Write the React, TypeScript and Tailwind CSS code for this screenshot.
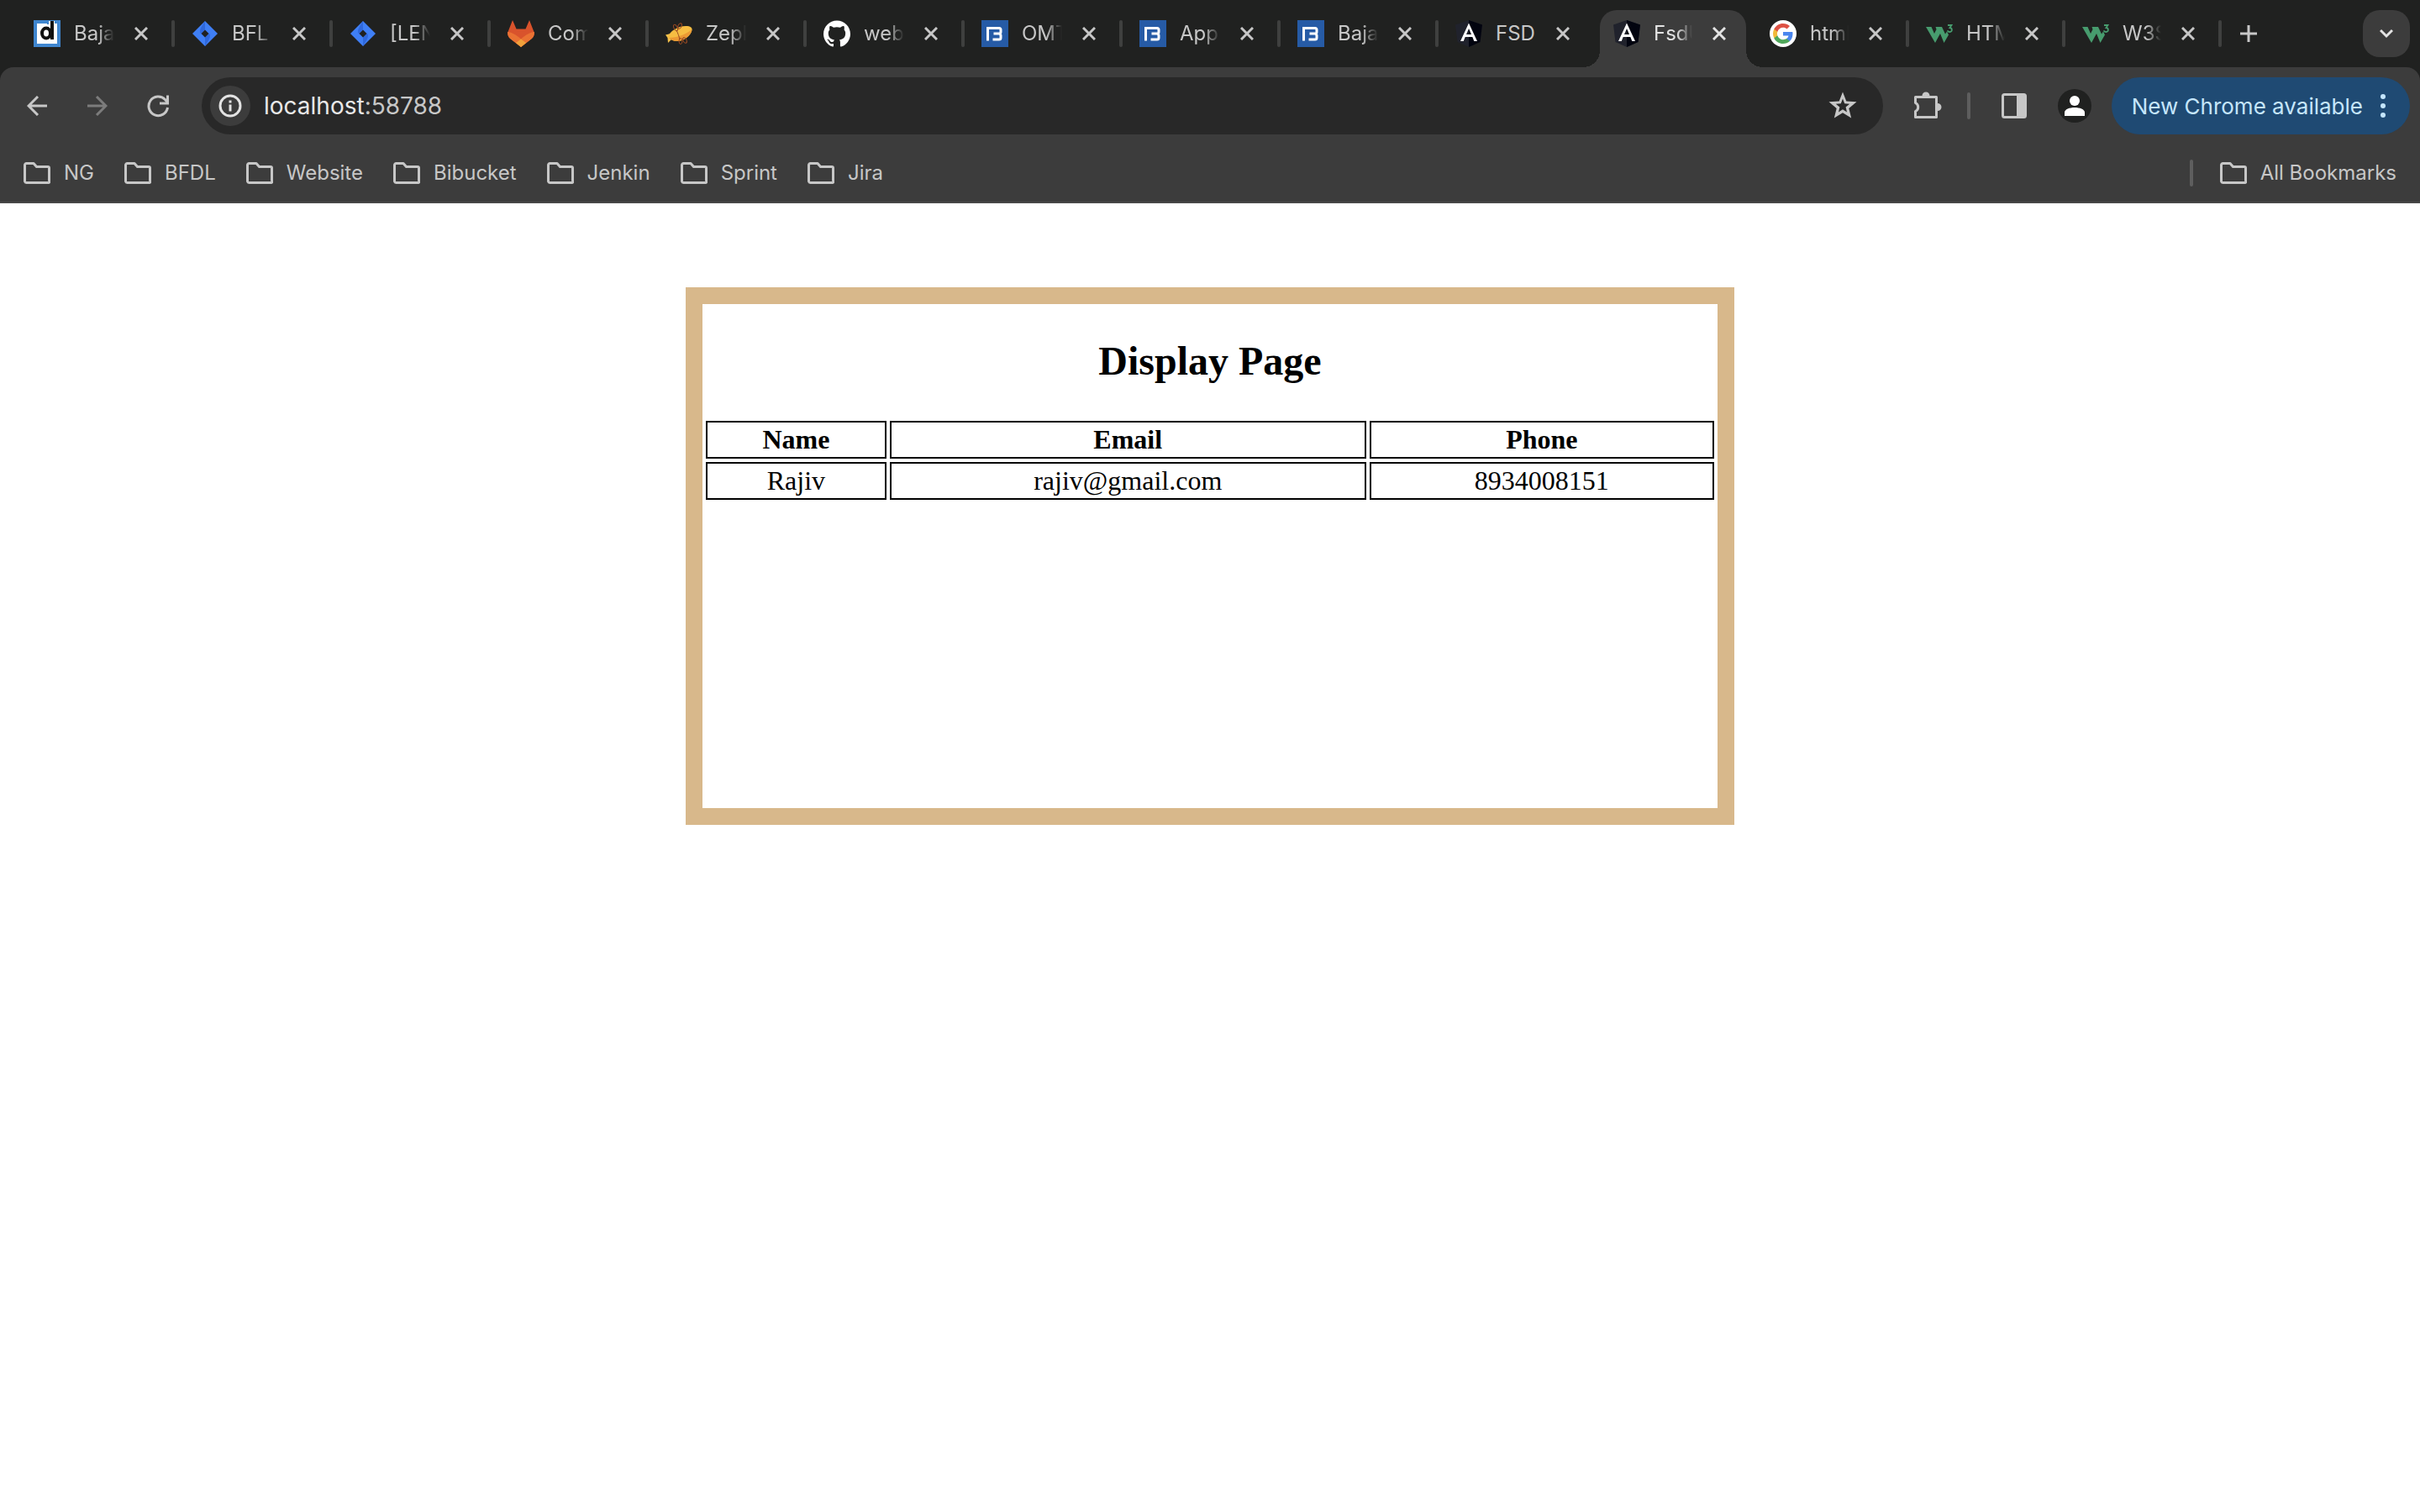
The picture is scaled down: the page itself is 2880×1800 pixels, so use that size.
import React from "react";
import { SiGithub } from "react-icons/si";

function DFav() {
  return (
    <svg className="size-8 shrink-0" viewBox="0 0 32 32" aria-hidden="true">
      <rect width="32" height="32" fill="#3f86cf" />
      <path d="M4 4h12v1h2V1h7v3h3v24H4z" fill="#fff" />
      <path d="M22 1v22" stroke="#111" strokeWidth="4" fill="none" />
      <ellipse cx="15" cy="15.500" rx="5" ry="6" stroke="#111" strokeWidth="4" fill="none" />
    </svg>
  );
}

function JiraFav() {
  return (
    <svg className="size-8 shrink-0" viewBox="0 0 32 32" aria-hidden="true">
      <path d="M16 1 31 16 16 31 1 16z" fill="#3f7ff5" />
      <path d="M16 1v10.500l-5 5C8 12 12 8 16 1z" fill="#2f68dc" />
      <path d="M16 31V20.500l5-5C24 20 20 24 16 31z" fill="#2f68dc" />
      <path d="M16 11.500 20.500 16 16 20.500 11.500 16z" fill="#202120" />
    </svg>
  );
}

function GitlabFav() {
  return (
    <svg className="size-8 shrink-0" viewBox="0 0 32 32" aria-hidden="true">
      <path d="M6 0 10.500 10.500h11L26 0l5.500 14c1 3-.5 6-2.500 7.500L16 32 3 21.500C1 20-.5 17 .5 14z" fill="#d9532c" />
      <path d="M0 14c5 .5 10 3 16 8.500C22 17 27 14.500 32 14c0 3.500-1 6-3 8L16 32 3 22c-2-2-3-4.500-3-8z" fill="#ea7233" />
      <path d="M16 22.500 22 27 16 32l-6-5z" fill="#f0a13b" />
    </svg>
  );
}

function ZeplinFav() {
  return (
    <svg className="size-8 shrink-0" viewBox="0 0 32 32" aria-hidden="true">
      <path d="M0 17.500 6 16 7 23 3 27 2.500 21z" fill="#f3c04a" />
      <path d="M3 20C5 13 15 7 24 7c6 0 8 2 7.500 5C30.500 18 22 25 14 25c-5 0-8-2-11-5z" fill="#f6bd42" />
      <path d="M4 21c9 0 21-4 27.300-10C31.500 17 22 25 14 25c-5 0-8-2-10-4z" fill="#ec9a34" />
      <g fill="none" stroke="#9a4a22" strokeWidth="1">
        <ellipse cx="12" cy="9" rx="2" ry="4" transform="rotate(-25 12 9)" />
        <ellipse cx="17" cy="7" rx="2" ry="3.500" transform="rotate(25 17 7)" />
        <path d="M13 12c2 4 3 7 4 11" />
        <ellipse cx="18" cy="25" rx="2" ry="3.500" />
        <ellipse cx="23" cy="24" rx="2" ry="3.500" transform="rotate(-25 23 24)" />
      </g>
    </svg>
  );
}

function BFav() {
  return (
    <svg className="size-8 shrink-0" viewBox="0 0 32 32" aria-hidden="true">
      <rect width="32" height="32" fill="#265ba6" />
      <path d="M7.500 24.500V9.500H21q2 0 2 2V14q0 2-2 2h-6.500M21 16q2 .5 2 2.500V21q0 2-2 2h-7.500" fill="none" stroke="#fff" strokeWidth="3" />
    </svg>
  );
}

function AngularFav() {
  return (
    <svg className="size-8 shrink-0" viewBox="0 0 32 32" aria-hidden="true">
      <path d="M16 0 32 5.500 29.500 26 16 32 2.500 26 0 5.500z" fill="#20222c" />
      <path d="M16 0 32 5.500 29.500 26 16 32z" fill="#02040f" />
      <path d="M16 3.500 6 25h3.700l2-5h8.600l2 5H26zm0 6.500 3 7h-6z" fill="#fff" />
    </svg>
  );
}

function GoogleFav() {
  return (
    <svg className="size-8 shrink-0" viewBox="0 0 32 32" aria-hidden="true">
      <circle cx="16" cy="16" r="16" fill="#fff" />
      <g transform="translate(4 4)">
        <path fill="#4a86ee" d="M23.500 12.300c0-.8-.1-1.600-.2-2.300H12v4.500h6.500c-.3 1.500-1.100 2.700-2.400 3.600v3h3.900c2.200-2.100 3.500-5.200 3.500-8.800z" />
        <path fill="#4fa75a" d="M12 24c3.200 0 6-1.100 8-2.900l-3.900-3c-1.100.7-2.500 1.200-4.100 1.200-3.100 0-5.800-2.100-6.700-5H1.300v3.100C3.300 21.300 7.300 24 12 24z" />
        <path fill="#f2b93a" d="M5.300 14.300c-.5-1.500-.5-3.100 0-4.600V6.600h-4c-1.700 3.400-1.700 7.400 0 10.800z" />
        <path fill="#dd5144" d="M12 4.700c1.800 0 3.300.6 4.600 1.800L20 3.100C17.900 1.200 15.200 0 12 0 7.300 0 3.300 2.700 1.300 6.600l4 3.100c.9-2.900 3.600-5 6.700-5z" />
      </g>
    </svg>
  );
}

function W3Fav() {
  return (
    <svg className="size-8 shrink-0" viewBox="0 0 32 32" aria-hidden="true">
      <path d="M0 8h6.500l3.500 8 2.500-5-1-3H19l4 8.500 2-3 2 4-5.500 9.500-4.500-11-6 11z" fill="#479c6e" />
      <path d="M26 6h4.500l-2 3c3 0 3.300 5 0 5-1.300 0-2.500-.5-2.500-1.800" fill="none" stroke="#479c6e" strokeWidth="1.800" />
    </svg>
  );
}

function CloseIcon() {
  return (
    <svg className="size-4" viewBox="0 0 16 16" fill="none" stroke="currentColor" strokeWidth="3" aria-hidden="true">
      <path d="M1 1 15 15M15 1 1 15" />
    </svg>
  );
}

function FolderIcon() {
  return (
    <svg className="h-7 w-8 shrink-0" viewBox="0 0 32 28" fill="none" stroke="currentColor" strokeWidth="3" strokeLinejoin="round" aria-hidden="true">
      <path d="M3.500 2.500H12l3.500 4H29a1.500 1.500 0 0 1 1.500 1.500v15A1.500 1.500 0 0 1 29 25.500H3.500A2 2 0 0 1 1.500 24V4.500a2 2 0 0 1 2-2z" />
    </svg>
  );
}

type TabInfo = { title: string; icon: () => React.JSX.Element };

const GithubFav = () => <SiGithub className="size-8 shrink-0 text-white" aria-hidden="true" />;

const leftTabs: TabInfo[] = [
  { title: "Baja", icon: DFav },
  { title: "BFL", icon: JiraFav },
  { title: "[LEN", icon: JiraFav },
  { title: "Com", icon: GitlabFav },
  { title: "Zepl", icon: ZeplinFav },
  { title: "web", icon: GithubFav },
  { title: "OMT", icon: BFav },
  { title: "Appl", icon: BFav },
  { title: "Baja", icon: BFav },
  { title: "FSD", icon: AngularFav },
];

const rightTabs: TabInfo[] = [
  { title: "html", icon: GoogleFav },
  { title: "HTM", icon: W3Fav },
  { title: "W3S", icon: W3Fav },
];

const bookmarks = ["NG", "BFDL", "Website", "Bibucket", "Jenkin", "Sprint", "Jira"];

function TabBody({ tab }: { tab: TabInfo }) {
  const Icon = tab.icon;
  return (
    <>
      <Icon />
      <span
        className={
          tab.title === "FSD"
            ? "min-w-0 flex-1 whitespace-nowrap"
            : "min-w-0 flex-1 overflow-hidden whitespace-nowrap [mask-image:linear-gradient(to_right,black_60%,transparent)]"
        }
      >
        {tab.title}
      </span>
      <button type="button" aria-label={`Close ${tab.title}`} className="flex size-8 shrink-0 items-center justify-center">
        <CloseIcon />
      </button>
    </>
  );
}

function Separator() {
  return <span className="h-8 w-1 shrink-0 rounded-full bg-[#3f403f]" />;
}

export default function App() {
  return (
    <div className="min-h-screen bg-white font-['Inter','Liberation_Sans',sans-serif]">
      <header className="bg-[#202120] text-[#c7c7c7]">
        <nav aria-label="Tabs" className="flex h-20 items-center pl-5 pr-3 text-2xl">
          {leftTabs.map((tab, i) => (
            <React.Fragment key={i}>
              <div className="flex w-[184px] items-center gap-4 px-5">
                <TabBody tab={tab} />
              </div>
              {i < leftTabs.length - 1 && <Separator />}
            </React.Fragment>
          ))}
          <div className="relative ml-2 flex h-[68px] w-[174px] items-center gap-4 self-end rounded-t-[20px] bg-[#3c3c3c] px-4 pb-3 text-[#e3e3e3] before:absolute before:bottom-0 before:right-full before:size-5 before:bg-[radial-gradient(circle_at_0_0,transparent_20px,#3c3c3c_20px)] after:absolute after:bottom-0 after:left-full after:size-5 after:bg-[radial-gradient(circle_at_100%_0,transparent_20px,#3c3c3c_20px)]">
            <TabBody tab={{ title: "FsdU", icon: AngularFav }} />
          </div>
          <div className="w-2" />
          {rightTabs.map((tab, i) => (
            <React.Fragment key={i}>
              <div className="flex w-[182px] items-center gap-4 px-5">
                <TabBody tab={tab} />
              </div>
              <Separator />
            </React.Fragment>
          ))}
          <button type="button" aria-label="New tab" className="ml-1 flex size-14 items-center justify-center">
            <svg className="size-5" viewBox="0 0 20 20" stroke="currentColor" strokeWidth="3" aria-hidden="true">
              <path d="M10 0v20M0 10h20" />
            </svg>
          </button>
          <button type="button" aria-label="Search tabs" className="ml-auto flex size-14 items-center justify-center rounded-[20px] bg-[#3c3c3c] text-[#e3e3e3]">
            <svg className="h-3 w-4" viewBox="0 0 16 12" fill="none" stroke="currentColor" strokeWidth="3" aria-hidden="true">
              <path d="M1 2l7 7 7-7" />
            </svg>
          </button>
        </nav>

        <div className="rounded-t-2xl border-b-2 border-[#484848] bg-[#3c3c3c]">
          <div className="flex h-[92px] items-center pl-5 pr-3">
            <button type="button" aria-label="Back" className="flex size-12 items-center justify-center">
              <svg className="size-6" viewBox="0 0 24 24" fill="none" stroke="currentColor" strokeWidth="3" aria-hidden="true">
                <path d="M24 12H2M13 1 2 12l11 11" />
              </svg>
            </button>
            <button type="button" aria-label="Forward" disabled className="ml-6 flex size-12 items-center justify-center text-[#7c7c7c]">
              <svg className="size-6" viewBox="0 0 24 24" fill="none" stroke="currentColor" strokeWidth="3" aria-hidden="true">
                <path d="M0 12h22M11 1l11 11-11 11" />
              </svg>
            </button>
            <button type="button" aria-label="Reload" className="ml-6 flex size-12 items-center justify-center">
              <svg className="size-7" viewBox="0 0 28 28" fill="none" stroke="currentColor" strokeWidth="3" aria-hidden="true">
                <path d="M25.500 16A11.300 11.300 0 1 1 22.500 6.500L25 9.500" />
                <path d="M25.500 1.500v9.500H16" />
              </svg>
            </button>
            <div className="ml-7 flex h-[68px] flex-1 items-center rounded-full bg-[#282828] pl-[10px] pr-7">
              <button type="button" aria-label="Site information" className="flex size-12 items-center justify-center rounded-full bg-[#3c3c3c] text-[#e3e3e3]">
                <svg className="size-7" viewBox="0 0 28 28" fill="none" stroke="currentColor" strokeWidth="3" aria-hidden="true">
                  <circle cx="14" cy="14" r="12" />
                  <path d="M14 12.500v8M14 7.500v3" />
                </svg>
              </button>
              <div role="textbox" aria-label="Address" className="ml-4 flex-1 text-[28px] leading-9 text-[#c7c7c7]">
                <span className="text-[#e8e8e8]">localhost</span>:58788
              </div>
              <button type="button" aria-label="Bookmark this tab" className="flex size-10 items-center justify-center">
                <svg className="size-9" viewBox="0 0 36 36" fill="currentColor" fillRule="evenodd" aria-hidden="true">
                  <path d="M18 1.500l4.300 11 12.200.8-9.200 7.700 2.900 11.500L18 26.200 7.800 32.500 10.700 21 1.500 13.300l12.200-.8zM18 9.500l-2.200 5.700-6 .5 4.600 3.900L13 25.500l5-3.200 5 3.200-1.400-5.900 4.600-3.900-6-.5z" />
                </svg>
              </button>
            </div>
            <button type="button" aria-label="Extensions" className="ml-8 flex size-10 items-center justify-center">
              <svg className="size-9" viewBox="0 0 36 36" aria-hidden="true">
                <path d="M4.500 7.500h25v24h-25v-7a5.500 5.500 0 0 0 0-10z" fill="none" stroke="currentColor" strokeWidth="3" strokeLinejoin="round" />
                <path d="M12.500 6a4.500 4.500 0 0 1 9 0zM31 15a4.500 4.500 0 0 1 0 9z" fill="currentColor" />
              </svg>
            </button>
            <span className="ml-7 h-8 w-1 rounded-full bg-[#5e5e5e]" />
            <button type="button" aria-label="Side panel" className="ml-8 flex size-10 items-center justify-center">
              <svg className="size-8" viewBox="0 0 32 32" aria-hidden="true">
                <rect x="2.500" y="2.500" width="27" height="27" rx="2" fill="none" stroke="currentColor" strokeWidth="3" />
                <path d="M19 2h11v28H19z" fill="currentColor" />
              </svg>
            </button>
            <button type="button" aria-label="Profile" className="ml-8 flex size-10 items-center justify-center rounded-full bg-[#202120] text-white">
              <svg className="size-6" viewBox="0 0 24 24" fill="currentColor" aria-hidden="true">
                <circle cx="12" cy="6" r="6" />
                <path d="M0 24v-4c0-4 6-6 12-6s12 2 12 6v4z" />
              </svg>
            </button>
            <button type="button" className="ml-6 flex h-[68px] items-center gap-5 rounded-full bg-[#1f4a73] pl-6 pr-7 text-[26px] text-[#c5e6fd]">
              New Chrome available
              <svg className="h-7 w-2" viewBox="0 0 8 28" fill="currentColor" aria-hidden="true">
                <circle cx="4" cy="3" r="3" />
                <circle cx="4" cy="14" r="3" />
                <circle cx="4" cy="25" r="3" />
              </svg>
            </button>
          </div>
          <nav aria-label="Bookmarks" className="flex h-[68px] items-center gap-9 px-7 text-2xl">
            {bookmarks.map((b) => (
              <a key={b} href="#" className="flex items-center gap-4">
                <FolderIcon />
                {b}
              </a>
            ))}
            <div className="ml-auto flex items-center gap-8">
              <span className="h-8 w-1 rounded-full bg-[#5e5e5e]" />
              <a href="#" className="flex items-center gap-4">
                <FolderIcon />
                All Bookmarks
              </a>
            </div>
          </nav>
        </div>
      </header>

      <main className="px-8 pt-[100px] font-['Liberation_Serif',serif] text-black">
        <section className="mx-auto min-h-[640px] max-w-[1248px] border-[20px] border-[#d8b88b]">
          <h1 className="py-10 text-center text-5xl leading-[55px] font-bold">Display Page</h1>
          <table className="w-full border-separate border-spacing-1 text-center text-[32px] leading-[37px]">
            <thead>
              <tr>
                {["Name", "Email", "Phone"].map((h) => (
                  <th key={h} className="border-2 border-black p-[2px] font-bold">
                    {h}
                  </th>
                ))}
              </tr>
            </thead>
            <tbody>
              <tr>
                {["Rajiv", "rajiv@gmail.com", "8934008151"].map((c) => (
                  <td key={c} className="border-2 border-black p-[2px]">
                    {c}
                  </td>
                ))}
              </tr>
            </tbody>
          </table>
        </section>
      </main>
    </div>
  );
}
